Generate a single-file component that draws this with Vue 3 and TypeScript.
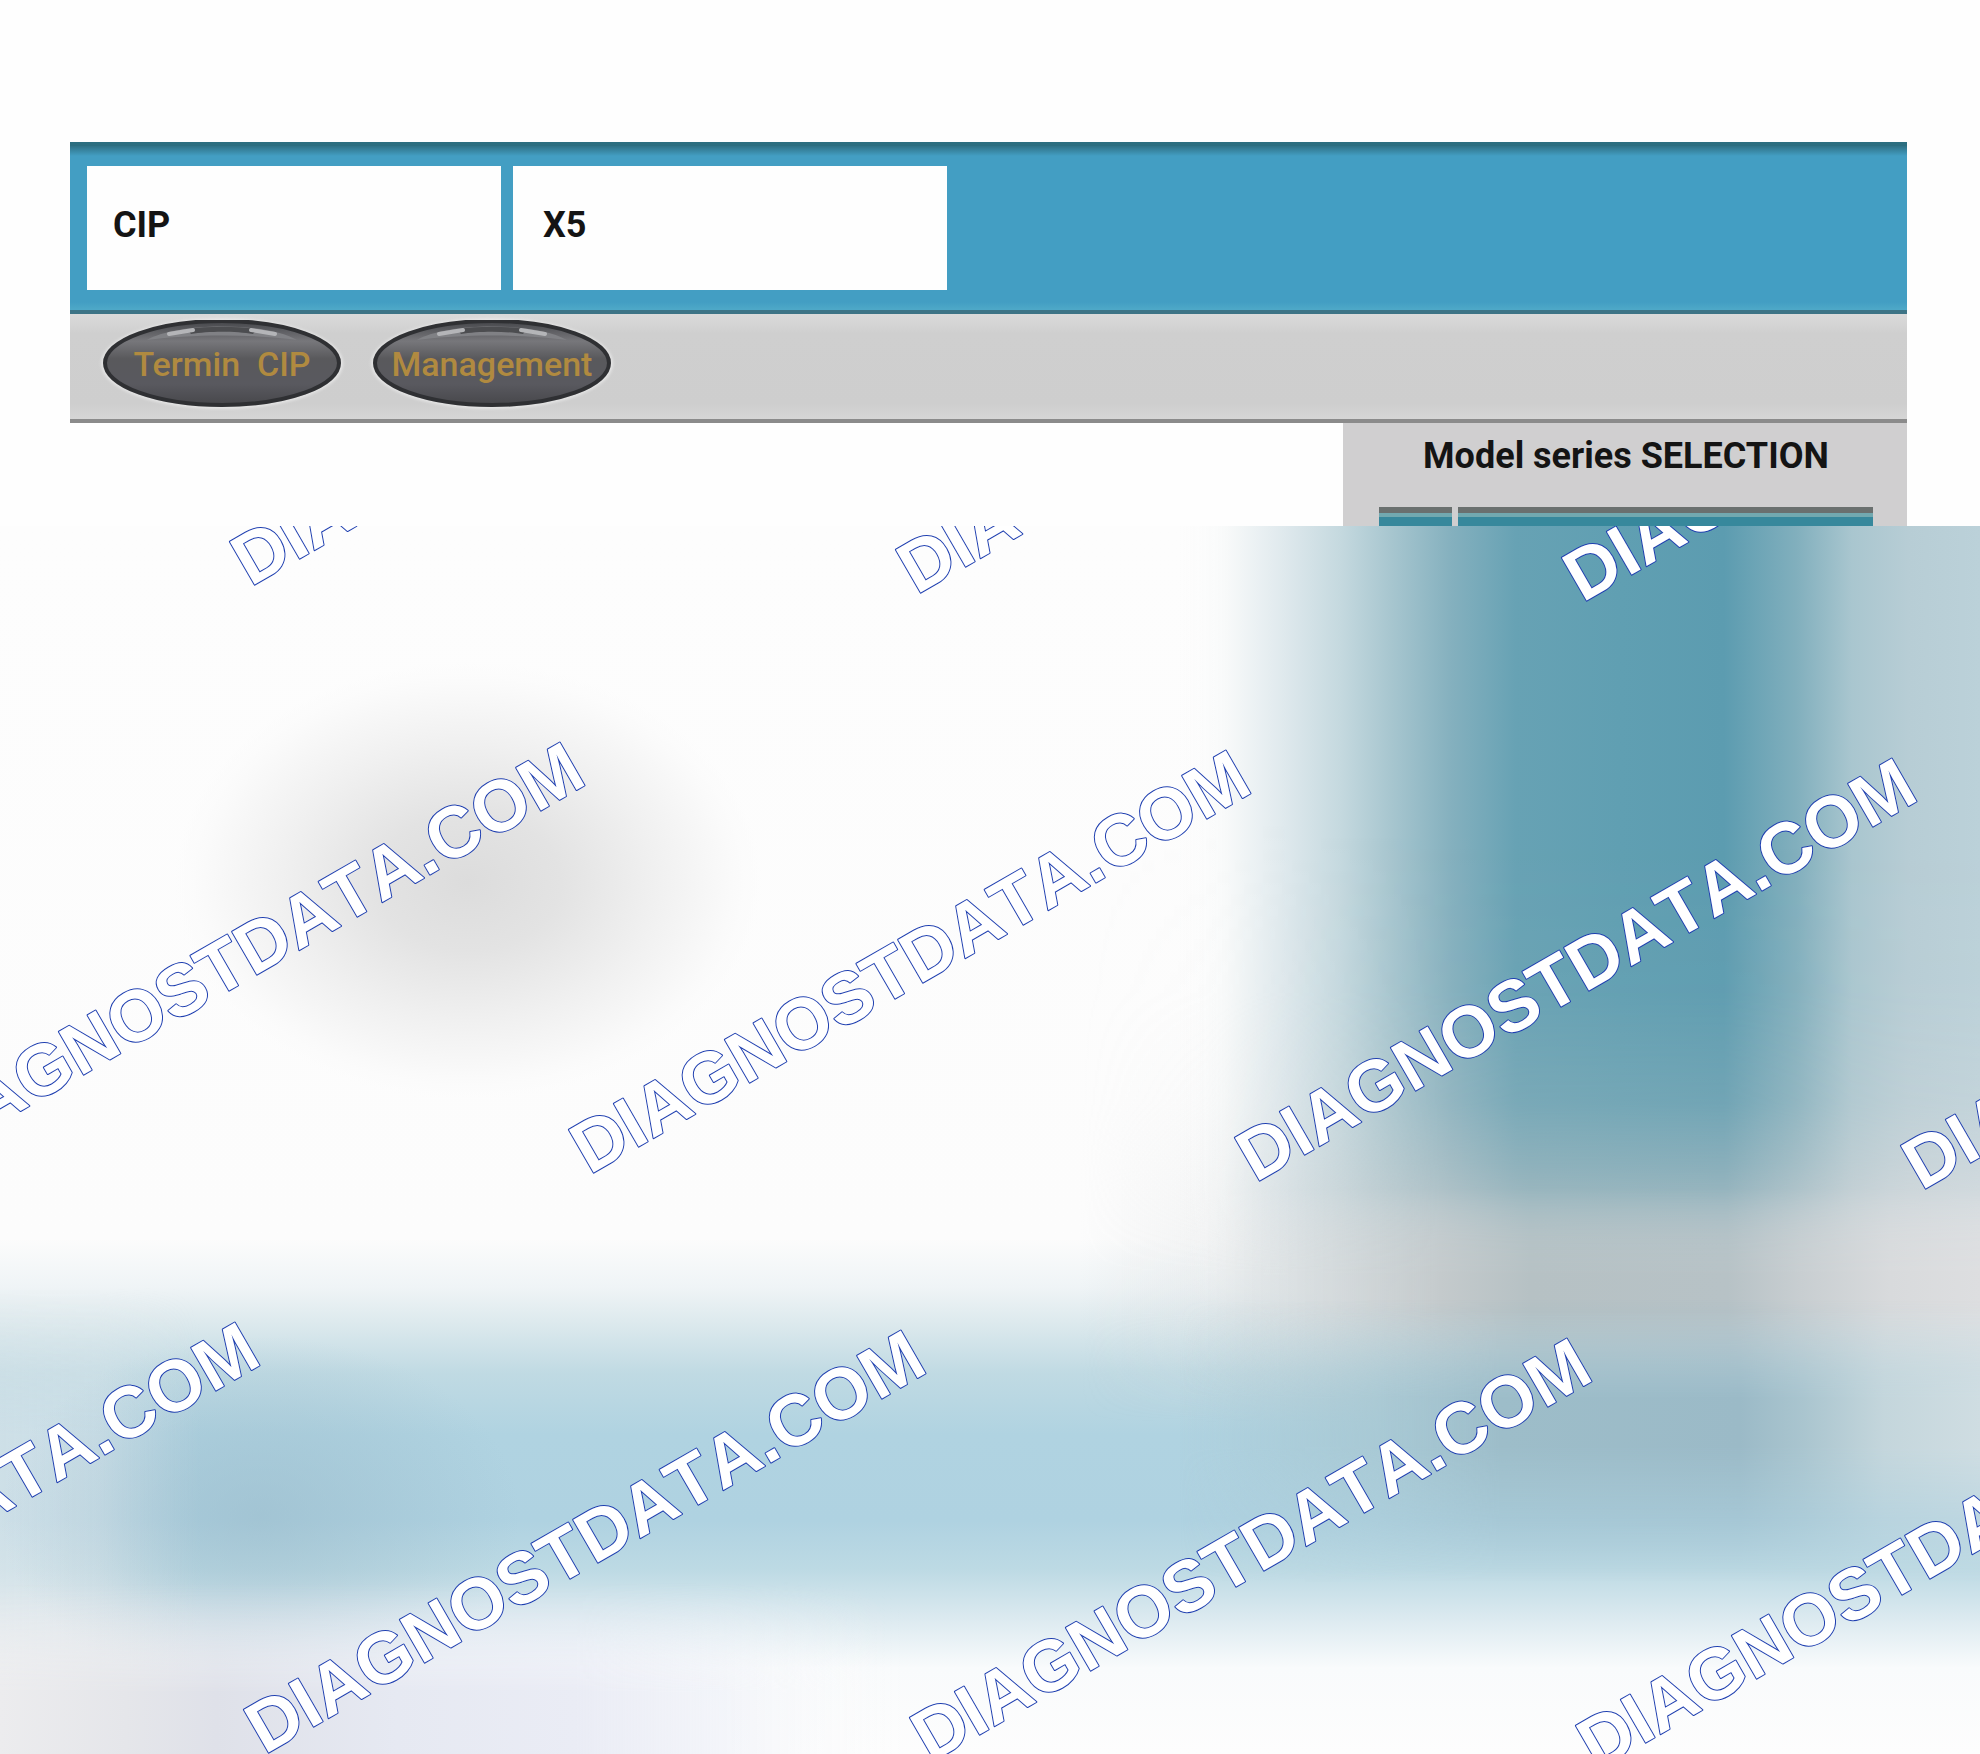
<script setup lang="ts">
interface Point {
  x: number
  y: number
}

const fields: string[] = ['CIP', 'X5']
const actions: string[] = ['Termin  CIP', 'Management']
const brand = 'DIAGNOSTDATA.COM'

// Baseline starts of the slanted marks, row by row
const rowStarts: Point[] = [
  { x: 254, y: 59 },
  { x: -73, y: 639 },
  { x: -398, y: 1219 },
]
const step: Point = { x: 666, y: 8 }
const marks: Point[] = rowStarts.flatMap((start) =>
  [0, 1, 2, 3].map((i) => ({ x: start.x + i * step.x, y: start.y + i * step.y })),
).filter((mark) => mark.x < 1980)
</script>

<template>
  <div class="page">
    <main class="window">
      <header class="banner">
        <div v-for="field in fields" :key="field" class="field">{{ field }}</div>
      </header>
      <nav class="toolbar">
        <button v-for="action in actions" :key="action" type="button" class="pill">
          <svg class="shine" viewBox="0 0 238 87" preserveAspectRatio="none" aria-hidden="true">
            <defs>
              <linearGradient id="body" x1="0" y1="0" x2="0" y2="1">
                <stop offset="0" stop-color="#45464a" />
                <stop offset="0.24" stop-color="#77777b" />
                <stop offset="0.45" stop-color="#59595c" />
                <stop offset="0.75" stop-color="#59595f" />
                <stop offset="1" stop-color="#47474b" />
              </linearGradient>
            </defs>
            <ellipse cx="119" cy="43" rx="117" ry="42" fill="url(#body)" stroke="#2f3033" stroke-width="4" />
            <path d="M44 20C75 2 163 2 194 20C150 14 88 14 44 20Z" fill="#808185" />
            <path d="M84 9C105 6 133 6 154 9L150 14C133 11 105 11 88 14Z" fill="#4c4d50" />
            <path d="M66 14L90 10M148 10L172 14" stroke="#b4b5b8" stroke-width="4" stroke-linecap="round" />
          </svg>
          <span class="caption">{{ action }}</span>
        </button>
      </nav>
      <section class="content">
        <aside class="selection">
          <h1 class="heading">Model series SELECTION</h1>
          <div class="list">
            <span class="cell narrow"></span>
            <span class="cell"></span>
          </div>
        </aside>
      </section>
    </main>

    <svg class="veil" viewBox="0 0 1980 1228" preserveAspectRatio="xMinYMin slice">
      <defs>
        <linearGradient id="base" x1="0" y1="0" x2="0" y2="1228" gradientUnits="userSpaceOnUse">
          <stop offset="0" stop-color="#fdfdfd" />
          <stop offset="0.58" stop-color="#fcfcfc" />
          <stop offset="0.62" stop-color="#eff4f6" />
          <stop offset="0.65" stop-color="#dce9ed" />
          <stop offset="0.69" stop-color="#c0dae3" />
          <stop offset="0.74" stop-color="#b0d3e1" />
          <stop offset="0.81" stop-color="#afd2e1" />
          <stop offset="0.85" stop-color="#bddae4" />
          <stop offset="0.89" stop-color="#dceaf0" />
          <stop offset="0.93" stop-color="#f9fbfc" />
          <stop offset="1" stop-color="#fdfdfd" />
        </linearGradient>
        <radialGradient id="spot">
          <stop offset="0" stop-color="#dcdcdc" />
          <stop offset="0.3" stop-color="#e3e3e3" />
          <stop offset="0.6" stop-color="#f0f0f0" />
          <stop offset="0.85" stop-color="#fafafa" />
          <stop offset="1" stop-color="#fdfdfd" stop-opacity="0" />
        </radialGradient>
        <linearGradient id="edge" x1="0" y1="0" x2="200" y2="0" gradientUnits="userSpaceOnUse">
          <stop offset="0" stop-color="#e6eaed" stop-opacity="0.55" />
          <stop offset="0.5" stop-color="#e6eaed" stop-opacity="0.5" />
          <stop offset="1" stop-color="#e6eaed" stop-opacity="0" />
        </linearGradient>
        <radialGradient id="shade">
          <stop offset="0" stop-color="#98b9c9" stop-opacity="0.55" />
          <stop offset="0.5" stop-color="#98b9c9" stop-opacity="0.28" />
          <stop offset="1" stop-color="#98b9c9" stop-opacity="0" />
        </radialGradient>
        <linearGradient id="lavender" x1="0" y1="0" x2="900" y2="0" gradientUnits="userSpaceOnUse">
          <stop offset="0" stop-color="#ececee" />
          <stop offset="0.14" stop-color="#e5e6ea" />
          <stop offset="0.24" stop-color="#dfe1e9" />
          <stop offset="0.44" stop-color="#e6e9f2" />
          <stop offset="0.64" stop-color="#eaecf5" />
          <stop offset="0.8" stop-color="#f0f2f8" stop-opacity="0.8" />
          <stop offset="1" stop-color="#fdfdfd" stop-opacity="0" />
        </linearGradient>
        <linearGradient id="teal" x1="1180" y1="0" x2="1980" y2="0" gradientUnits="userSpaceOnUse">
          <stop offset="0" stop-color="#fdfdfd" stop-opacity="0" />
          <stop offset="0.06" stop-color="#f7f9f9" />
          <stop offset="0.13" stop-color="#dfe9ed" />
          <stop offset="0.2" stop-color="#c5d9df" />
          <stop offset="0.26" stop-color="#a9c7d0" />
          <stop offset="0.34" stop-color="#84b0be" />
          <stop offset="0.42" stop-color="#67a2b4" />
          <stop offset="0.55" stop-color="#609fb2" />
          <stop offset="0.68" stop-color="#5c9cb0" />
          <stop offset="0.77" stop-color="#81afbd" />
          <stop offset="0.84" stop-color="#a9c6cf" />
          <stop offset="0.91" stop-color="#b7cdd5" />
          <stop offset="1" stop-color="#bbd1d9" />
        </linearGradient>
        <linearGradient id="ash" x1="1080" y1="0" x2="1980" y2="0" gradientUnits="userSpaceOnUse">
          <stop offset="0" stop-color="#d4d8da" stop-opacity="0" />
          <stop offset="0.14" stop-color="#d4d8da" stop-opacity="0.25" />
          <stop offset="0.28" stop-color="#d0d5d7" stop-opacity="0.8" />
          <stop offset="0.4" stop-color="#c4cacc" />
          <stop offset="0.5" stop-color="#b6c1c4" />
          <stop offset="0.72" stop-color="#b7c2c6" />
          <stop offset="0.8" stop-color="#c8ced1" />
          <stop offset="0.9" stop-color="#d8dadc" />
          <stop offset="1" stop-color="#dddee0" />
        </linearGradient>
        <linearGradient id="slate" x1="1180" y1="0" x2="1980" y2="0" gradientUnits="userSpaceOnUse">
          <stop offset="0" stop-color="#a6c6d1" stop-opacity="0" />
          <stop offset="0.25" stop-color="#a6c6d1" stop-opacity="0.8" />
          <stop offset="0.4" stop-color="#9dbdc9" />
          <stop offset="0.7" stop-color="#9bbac7" />
          <stop offset="0.78" stop-color="#aac5cf" />
          <stop offset="0.88" stop-color="#c4d6dc" />
          <stop offset="1" stop-color="#cfdde2" />
        </linearGradient>
        <linearGradient id="fadeTeal" x1="0" y1="0" x2="0" y2="1228" gradientUnits="userSpaceOnUse">
          <stop offset="0.54" stop-color="#fff" />
          <stop offset="0.64" stop-color="#000" />
        </linearGradient>
        <linearGradient id="fadeAsh" x1="0" y1="0" x2="0" y2="1228" gradientUnits="userSpaceOnUse">
          <stop offset="0.24" stop-color="#fff" stop-opacity="0" />
          <stop offset="0.38" stop-color="#fff" stop-opacity="0.06" />
          <stop offset="0.47" stop-color="#fff" stop-opacity="0.24" />
          <stop offset="0.52" stop-color="#fff" stop-opacity="0.5" />
          <stop offset="0.58" stop-color="#fff" stop-opacity="0.9" />
          <stop offset="0.61" stop-color="#fff" />
          <stop offset="0.64" stop-color="#fff" />
          <stop offset="0.73" stop-color="#fff" stop-opacity="0" />
        </linearGradient>
        <linearGradient id="fadeSlate" x1="0" y1="0" x2="0" y2="1228" gradientUnits="userSpaceOnUse">
          <stop offset="0.63" stop-color="#fff" stop-opacity="0" />
          <stop offset="0.71" stop-color="#fff" />
          <stop offset="0.75" stop-color="#fff" />
          <stop offset="0.86" stop-color="#fff" stop-opacity="0" />
        </linearGradient>
        <linearGradient id="fadeEdge" x1="0" y1="0" x2="0" y2="1228" gradientUnits="userSpaceOnUse">
          <stop offset="0.62" stop-color="#fff" stop-opacity="0" />
          <stop offset="0.74" stop-color="#fff" />
          <stop offset="1" stop-color="#fff" />
        </linearGradient>
        <linearGradient id="fadeLavender" x1="0" y1="0" x2="0" y2="1228" gradientUnits="userSpaceOnUse">
          <stop offset="0.86" stop-color="#fff" stop-opacity="0" />
          <stop offset="0.95" stop-color="#fff" />
        </linearGradient>
        <mask id="maskTeal"><rect x="0" y="0" width="1980" height="1228" fill="url(#fadeTeal)" /></mask>
        <mask id="maskAsh"><rect x="0" y="0" width="1980" height="1228" fill="url(#fadeAsh)" /></mask>
        <mask id="maskSlate"><rect x="0" y="0" width="1980" height="1228" fill="url(#fadeSlate)" /></mask>
        <mask id="maskEdge"><rect x="0" y="0" width="1980" height="1228" fill="url(#fadeEdge)" /></mask>
        <mask id="maskLavender"><rect x="0" y="0" width="1980" height="1228" fill="url(#fadeLavender)" /></mask>
      </defs>

      <rect width="1980" height="1228" fill="url(#base)" />
      <ellipse cx="468" cy="356" rx="310" ry="230" fill="url(#spot)" />
      <rect width="200" height="1228" fill="url(#edge)" mask="url(#maskEdge)" />
      <ellipse cx="260" cy="990" rx="260" ry="180" fill="url(#shade)" />
      <rect width="900" height="1228" fill="url(#lavender)" mask="url(#maskLavender)" />
      <rect x="1180" width="800" height="1228" fill="url(#teal)" mask="url(#maskTeal)" />
      <rect x="1080" width="900" height="1228" fill="url(#ash)" mask="url(#maskAsh)" />
      <rect x="1180" width="800" height="1228" fill="url(#slate)" mask="url(#maskSlate)" />

      <text
        v-for="mark in marks"
        :key="`${mark.x}:${mark.y}`"
        class="mark"
        :transform="`translate(${mark.x} ${mark.y}) rotate(-30)`"
        x="-4"
        y="0"
      >{{ brand }}</text>
    </svg>
  </div>
</template>

<style>
body {
  margin: 0;
  background: #fefefe;
}
</style>

<style scoped>
.page {
  display: flex;
  flex-direction: column;
  min-height: 100vh;
  font-family: Roboto, "Liberation Sans", sans-serif;
  color: #141414;
}

.window {
  margin: 142px 73px 0 70px;
}

.banner {
  display: flex;
  gap: 12px;
  box-sizing: border-box;
  height: 172px;
  padding: 20px 17px 20px;
  background: linear-gradient(#2f7186, #439ec3 10px, #439ec3 156px, #4fa9c8);
  border-top: 4px solid #2c6e80;
  border-bottom: 4px solid #3d7486;
}

.field {
  flex: 0 1 434px;
  display: flex;
  align-items: center;
  box-sizing: border-box;
  padding: 0 0 6px 30px;
  background: #fefefe;
  font-size: 36px;
  font-weight: 700;
}

.field:first-child {
  flex-basis: 414px;
  padding-left: 26px;
}

.toolbar {
  display: flex;
  align-items: flex-start;
  gap: 32px;
  box-sizing: border-box;
  height: 109px;
  padding: 6px 33px;
  background: linear-gradient(#dadada, #cfcfcf 20px, #cecece 90px, #d6d6d6);
  border-bottom: 4px solid #8b8b8b;
}

.pill {
  position: relative;
  width: 238px;
  height: 87px;
  padding: 0;
  border: 0;
  border-radius: 50%;
  background: none;
  box-shadow: 0 0 3px 2px #e6e6e6;
  font: 500 34px Roboto, "Liberation Sans", sans-serif;
  color: #b08a40;
}

.shine {
  position: absolute;
  inset: 0;
  width: 100%;
  height: 100%;
}

.caption {
  position: relative;
  white-space: pre;
}

.content {
  display: flex;
  justify-content: flex-end;
}

.selection {
  box-sizing: border-box;
  width: 564px;
  height: 103px;
  padding: 11px 34px 0 36px;
  background: #d0cfd0;
}

.heading {
  margin: 0 0 29px;
  font-size: 36px;
  line-height: 44px;
  font-weight: 700;
  text-align: center;
}

.list {
  display: flex;
  gap: 6px;
}

.cell {
  flex: 1;
  box-sizing: border-box;
  height: 19px;
  background: #37889c;
  border-top: 6px solid #6a706f;
  box-shadow: inset 0 4px #72a9b0;
}

.narrow {
  flex: 0 0 73px;
}

.veil {
  display: block;
  flex: 1 0 auto;
  width: 100%;
}

.mark {
  font: 700 72px "Liberation Sans", sans-serif;
  font-kerning: none;
  fill: #fff;
  stroke: #1f3fb0;
  stroke-width: 2px;
  stroke-linejoin: round;
  paint-order: stroke;
}
</style>
